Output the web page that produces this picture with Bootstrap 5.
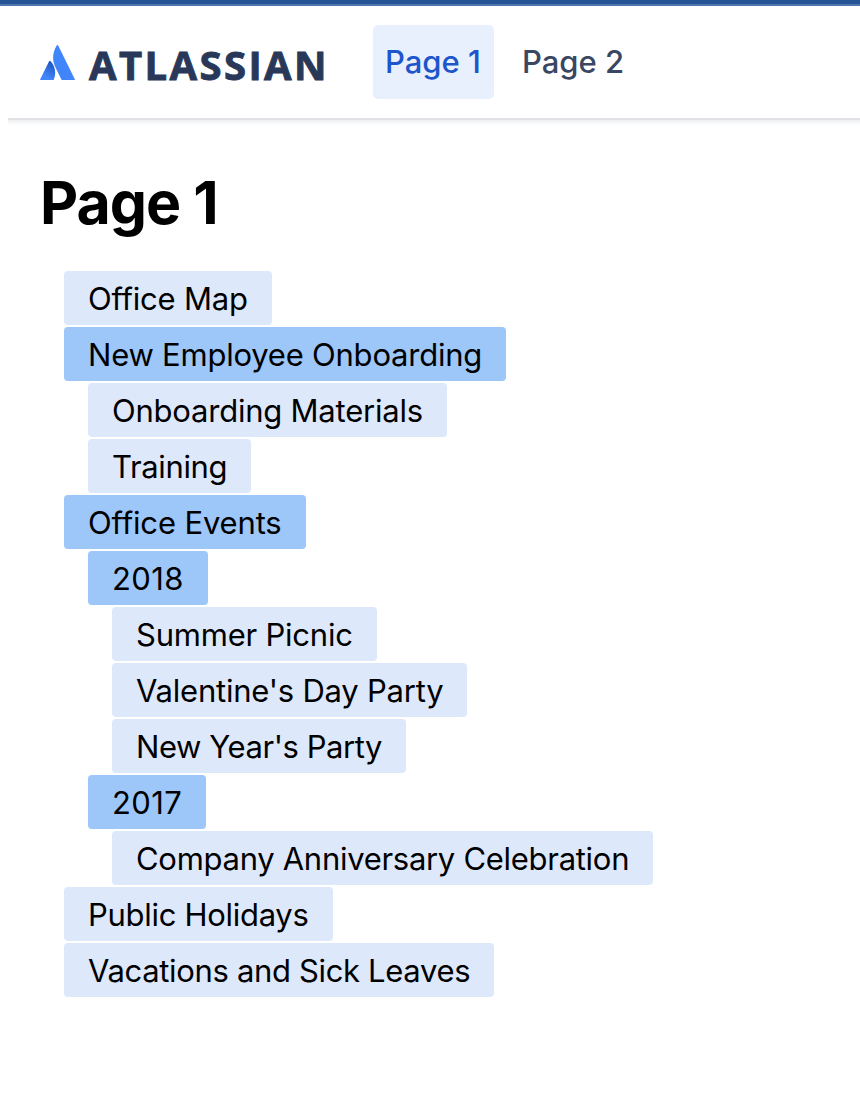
<!DOCTYPE html>
<html lang="en">
<head>
<meta charset="utf-8">
<meta name="viewport" content="width=device-width, initial-scale=1">
<title>Page 1</title>
<link href="https://cdn.jsdelivr.net/npm/bootstrap@5.3.0/dist/css/bootstrap.min.css" rel="stylesheet">
<style>
body{font-family:Inter,"Liberation Sans",sans-serif;font-size:31px;color:#000;background:#fff;overflow:hidden}
.topline{height:6px;background:#255496;border-bottom:2px solid #4f77ae}
.site-nav{height:114px;margin-left:8px;padding:19px 0 0 32px;border-bottom:2px solid #dfe1e5;box-shadow:0 2px 0 #f0f1f3,0 4px 0 #f7f8f9,0 6px 0 #fdfdfd}
.brand-mark{width:35px;height:35px;margin-top:20px}
.brand-name{font-family:"Open Sans",sans-serif;font-weight:700;font-size:40px;line-height:46px;letter-spacing:2.4px;-webkit-text-stroke:.9px #293858;color:#293858;margin:17px 0 0 14px;width:284px}
.tab{height:74px;line-height:74px;border-radius:5px;padding:0 12px;font-weight:500;color:#3a4763;white-space:nowrap;text-decoration:none}
.tab.on{width:121px;background:#e9f0fd;color:#1d55cc}
.tab.off{margin-left:16px}
h1{font-size:59px;font-weight:700;line-height:70px;letter-spacing:-1px;margin:48px 0 33px 40px}
.tree{padding-left:64px}
.tree ul{padding-left:24px}
.node{display:block;width:fit-content;height:54px;line-height:55px;margin-bottom:2px;padding:0 24px;border-radius:4px;background:#dee8fb;color:#000;white-space:nowrap;text-decoration:none;letter-spacing:-.22px}
.node.open{background:#9dc6f9}
.node.loose{letter-spacing:-.15px}
.node.snug{letter-spacing:-.29px}
.node.tight{letter-spacing:-.34px}
.node.tighter{letter-spacing:-.43px}
.node.year{letter-spacing:.4px}
</style>
</head>
<body>
<div class="topline"></div>
<nav class="site-nav d-flex align-items-start">
  <a class="d-flex text-decoration-none" href="#">
    <svg class="brand-mark" viewBox="0 0 35 35" aria-hidden="true">
      <defs><linearGradient id="fold" x1="14" y1="17" x2="5" y2="31" gradientUnits="userSpaceOnUse"><stop offset="0" stop-color="#1b51c0"/><stop offset="1" stop-color="#4286fa"/></linearGradient></defs>
      <path fill="url(#fold)" d="M9.1 16.3Q9.8 15.2 10.7 16.2C15 20.8 16.6 28.2 13.7 34.7Q13.5 35 13.1 35H.7Q-.1 35 .2 34.2Z"/>
      <path fill="#4085fa" d="M16.7.5Q17.4-.5 18.2.6L34.8 34.2Q35.2 35 34.4 35H22.3Q21.7 35 21.4 34.4L15 21.6C12 14.5 12.6 7 16.7.5Z"/>
    </svg>
    <span class="brand-name">ATLASSIAN</span>
  </a>
  <a class="tab on" href="#">Page 1</a>
  <a class="tab off" href="#">Page 2</a>
</nav>
<main>
  <h1>Page 1</h1>
  <ul class="tree list-unstyled mb-0">
    <li><a class="node" href="#">Office Map</a></li>
    <li><a class="node open" href="#">New Employee Onboarding</a>
      <ul class="list-unstyled">
        <li><a class="node" href="#">Onboarding Materials</a></li>
        <li><a class="node tight" href="#">Training</a></li>
      </ul>
    </li>
    <li><a class="node open loose" href="#">Office Events</a>
      <ul class="list-unstyled">
        <li><a class="node open year" href="#">2018</a>
          <ul class="list-unstyled">
            <li><a class="node" href="#">Summer Picnic</a></li>
            <li><a class="node" href="#">Valentine's Day Party</a></li>
            <li><a class="node tighter" href="#">New Year's Party</a></li>
          </ul>
        </li>
        <li><a class="node open year" href="#">2017</a>
          <ul class="list-unstyled">
            <li><a class="node snug" href="#">Company Anniversary Celebration</a></li>
          </ul>
        </li>
      </ul>
    </li>
    <li><a class="node snug" href="#">Public Holidays</a></li>
    <li><a class="node tight" href="#">Vacations and Sick Leaves</a></li>
  </ul>
</main>
<script src="https://cdn.jsdelivr.net/npm/bootstrap@5.3.0/dist/js/bootstrap.bundle.min.js"></script>
</body>
</html>
